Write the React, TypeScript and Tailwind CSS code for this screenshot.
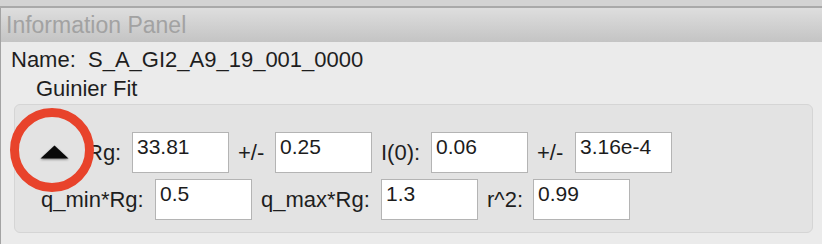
import React from "react";

function Field({ value }: { value: string }) {
  return (
    <div className="h-[41px] w-[97px] shrink-0 border border-[#b4b4b4] bg-white pl-[4px] pt-[2px] text-[21px] leading-[24px] text-[#1c1c1c]">
      {value}
    </div>
  );
}

function Label({ text, w, pl }: { text: string; w: string; pl: string }) {
  return (
    <div className={`${w} ${pl} shrink-0 whitespace-nowrap text-[22px] leading-[26px] text-[#1e1e1e]`}>
      {text}
    </div>
  );
}

export default function App() {
  return (
    <div className="relative flex h-[244px] w-[822px] flex-col overflow-hidden bg-[#ebebeb] font-['Liberation_Sans',Arial,sans-serif]">
      <div className="h-[6px] shrink-0 bg-[#d3d3d3]" />
      <div className="h-[2px] shrink-0 bg-[#a9a9a9]" />
      <div className="flex flex-1 flex-col border-l border-[#a3a3a3]">
        <div className="flex h-[34px] shrink-0 items-center bg-gradient-to-b from-[#dedede] to-[#c4c4c4] pl-[5px]">
          <span className="text-[23px] leading-[26px] text-[#a2a2a2]">Information Panel</span>
        </div>
        <div className="flex flex-col pt-[5px]">
          <div className="pl-[10px] text-[22px] leading-[26px] whitespace-pre text-[#1e1e1e]">
            {"Name:  S_A_GI2_A9_19_001_0000"}
          </div>
          <div className="mt-[3px] pl-[35px] text-[22px] leading-[26px] text-[#1e1e1e]">Guinier Fit</div>
          <div className="ml-[13px] mr-[9px] mt-[2px] flex h-[129px] flex-col gap-[6px] rounded-[6px] border border-[#d5d5d5] bg-[#e3e3e3] pt-[27px]">
            <div className="flex items-center">
              <div className="flex w-[72px] shrink-0 items-center pl-[25px]">
                <svg width="29" height="15" viewBox="0 0 29 15" className="drop-shadow-[0_1px_1px_rgba(0,0,0,0.45)]">
                  <polygon points="0.5,13.5 14.5,0.5 28.5,13.5" fill="#0a0a0a" />
                </svg>
              </div>
              <Label text="Rg:" w="w-[45px]" pl="pl-0" />
              <Field value="33.81" />
              <Label text="+/-" w="w-[46px]" pl="pl-[9px]" />
              <Field value="0.25" />
              <Label text="I(0):" w="w-[59px]" pl="pl-[9px]" />
              <Field value="0.06" />
              <Label text="+/-" w="w-[47px]" pl="pl-[9px]" />
              <Field value="3.16e-4" />
            </div>
            <div className="flex items-center">
              <Label text="q_min*Rg:" w="w-[140px]" pl="pl-[26px]" />
              <Field value="0.5" />
              <Label text="q_max*Rg:" w="w-[129px]" pl="pl-[9px]" />
              <Field value="1.3" />
              <Label text="r^2:" w="w-[55px]" pl="pl-[9px]" />
              <Field value="0.99" />
            </div>
          </div>
        </div>
      </div>
      <svg
        className="pointer-events-none absolute left-0 top-0"
        width="120"
        height="220"
        viewBox="0 0 120 220"
      >
        <circle cx="52" cy="150" r="37.5" fill="none" stroke="#e8432b" strokeWidth="9" />
      </svg>
    </div>
  );
}
